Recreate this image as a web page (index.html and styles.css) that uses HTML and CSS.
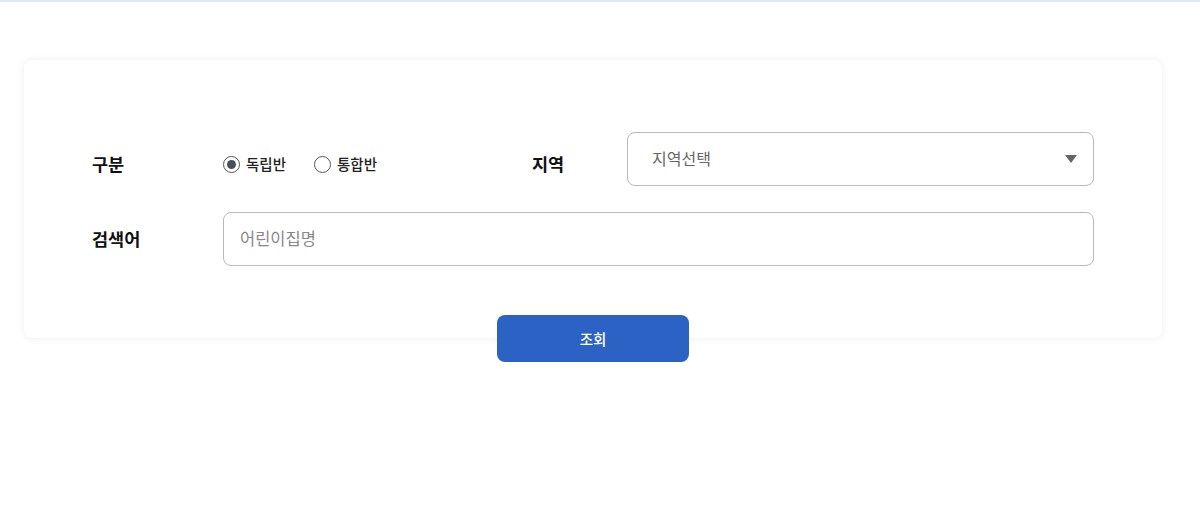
FILE: index.html
```html
<!DOCTYPE html>
<html lang="ko">
<head>
<meta charset="utf-8">
<link rel="stylesheet" href="styles.css">
</head>
<body>
<div class="topline"></div>
<main class="page">
  <section class="card">
    <div class="form">
      <div class="label row1">구분</div>
      <div class="radios row1">
        <label class="radio"><span class="dot checked"></span><span>독립반</span></label>
        <label class="radio"><span class="dot"></span><span>통합반</span></label>
      </div>
      <div class="label row1">지역</div>
      <div class="select">
        <span class="select-text">지역선택</span>
        <span class="caret"></span>
      </div>
      <div class="label">검색어</div>
      <div class="input span3"><span class="placeholder">어린이집명</span></div>
    </div>
    <div class="actions">
      <button class="btn">조회</button>
    </div>
  </section>
</main>
</body>
</html>
```
FILE: styles.css
```css
* { box-sizing: border-box; }
html, body { margin: 0; padding: 0; background: #fff; }
body {
  font-family: "Noto Sans CJK KR", "Noto Sans", sans-serif;
  color: #111;
  min-height: 530px;
}
.topline {
  height: 2px;
  background: #dce9f4;
}
.page {
  padding: 58px 38px 120px 24px;
}
.card {
  background: #fff;
  border-radius: 8px;
  box-shadow: 0 0 8px rgba(0, 0, 0, 0.07);
  padding: 72px 68px 0 68px;
  display: flex;
  flex-direction: column;
}
.form {
  display: grid;
  grid-template-columns: 131px 309px 95px 1fr;
  row-gap: 26px;
  align-items: center;
}
.label {
  font-size: 17.5px;
  font-weight: 700;
  color: #111;
  line-height: 24px;
}
.row1 { padding-top: 10px; }
.radios {
  display: flex;
  gap: 28px;
  align-items: center;
}
.radio {
  display: flex;
  align-items: center;
  gap: 6px;
  font-size: 14.5px;
  font-weight: 500;
  color: #222;
  line-height: 20px;
}
.dot {
  width: 17px;
  height: 17px;
  border-radius: 50%;
  border: 1px solid #555;
  background: #fff;
  display: flex;
  align-items: center;
  justify-content: center;
}
.dot.checked::after {
  content: "";
  width: 9px;
  height: 9px;
  border-radius: 50%;
  background: #4b5058;
}
.select, .input {
  height: 54px;
  border: 1px solid #b9b9b9;
  border-radius: 8px;
  display: flex;
  align-items: center;
}
.select {
  padding: 0 16px 0 24px;
  justify-content: space-between;
}
.select-text {
  font-size: 16px;
  color: #666;
  margin-top: -2px;
}
.caret {
  width: 0;
  height: 0;
  border-left: 6px solid transparent;
  border-right: 6px solid transparent;
  border-top: 8px solid #666;
  margin-top: -1px;
}
.input.span3 { grid-column: 2 / 5; padding: 0 16px; }
.placeholder {
  font-size: 16.5px;
  color: #888;
  margin-top: -2px;
}
.actions {
  display: flex;
  justify-content: center;
  margin-top: 49px;
  margin-bottom: -24px;
  position: relative;
  z-index: 1;
}
.btn {
  width: 192px;
  height: 47px;
  border: none;
  border-radius: 8px;
  background: #2d62c5;
  color: #fff;
  font-family: "Noto Sans CJK KR", "Noto Sans", sans-serif;
  font-size: 14.5px;
  font-weight: 500;
}
```
